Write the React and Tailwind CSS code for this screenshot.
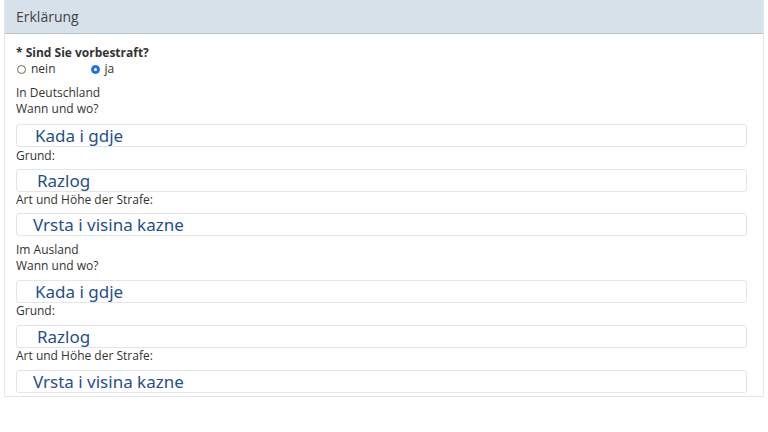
export default function App() {
  const font = { fontFamily: '"Open Sans", "Noto Sans", sans-serif' };

  function Label({ children, className = "" }) {
    return (
      <div className={"text-[12px] leading-[16px] text-[#333] " + className}>{children}</div>
    );
  }

  function Field({ value, pad, className = "" }) {
    return (
      <div
        className={
          "h-[23px] border border-[#e3e6e8] rounded-[3px] bg-white flex items-center overflow-visible " +
          className
        }
      >
        <span
          className={"text-[17px] leading-[22px] pt-[1px] text-[#1f4f8f] whitespace-nowrap " + pad}
          style={{ fontFamily: '"Noto Sans", "Open Sans", sans-serif' }}
        >
          {value}
        </span>
      </div>
    );
  }

  function Radio({ checked }) {
    return checked ? (
      <span className="block shrink-0 w-[9px] h-[9px] rounded-full bg-[#1a73e8] border border-[#1a73e8] flex items-center justify-center">
        <span className="block w-[3px] h-[3px] rounded-full bg-white" />
      </span>
    ) : (
      <span className="block shrink-0 w-[9px] h-[9px] rounded-full border border-[#666] bg-white" />
    );
  }

  return (
    <div className="w-[768px] h-[432px] bg-white" style={font}>
      <div className="ml-[4px] mr-[4px] h-[397px] border-x border-b border-[#e4e7ea]">
        <div className="h-[34px] bg-[#d6e1ea] border-b border-[#b9c4cc] pl-[11px] flex items-center">
          <span className="text-[14px] text-[#444]">Erklärung</span>
        </div>
        <div className="pl-[11px] pr-[16px] pt-[11px]">
          <Label className="font-bold text-[#111] text-[11px]">* Sind Sie vorbestraft?</Label>
          <div className="flex items-center h-[16px] text-[12px] text-[#333]">
            <span className="ml-[1px]"><Radio /></span>
            <span className="ml-[5px]">nein</span>
            <span className="ml-[35px]"><Radio checked /></span>
            <span className="ml-[5px]">ja</span>
          </div>
          <Label className="mt-[8px]">In Deutschland</Label>
          <Label>Wann und wo?</Label>
          <Field value="Kada i gdje" pad="pl-[18px]" className="mt-[7px] mb-[1px]" />
          <Label>Grund:</Label>
          <Field value="Razlog" pad="pl-[20px]" className="mt-[5px]" />
          <Label>Art und Höhe der Strafe:</Label>
          <Field value="Vrsta i visina kazne" pad="pl-[16px]" className="mt-[5px]" />
          <Label className="mt-[6px]">Im Ausland</Label>
          <Label>Wann und wo?</Label>
          <Field value="Kada i gdje" pad="pl-[18px]" className="mt-[6px]" />
          <Label>Grund:</Label>
          <Field value="Razlog" pad="pl-[20px]" className="mt-[6px]" />
          <Label>Art und Höhe der Strafe:</Label>
          <Field value="Vrsta i visina kazne" pad="pl-[16px]" className="mt-[6px]" />
        </div>
      </div>
    </div>
  );
}
